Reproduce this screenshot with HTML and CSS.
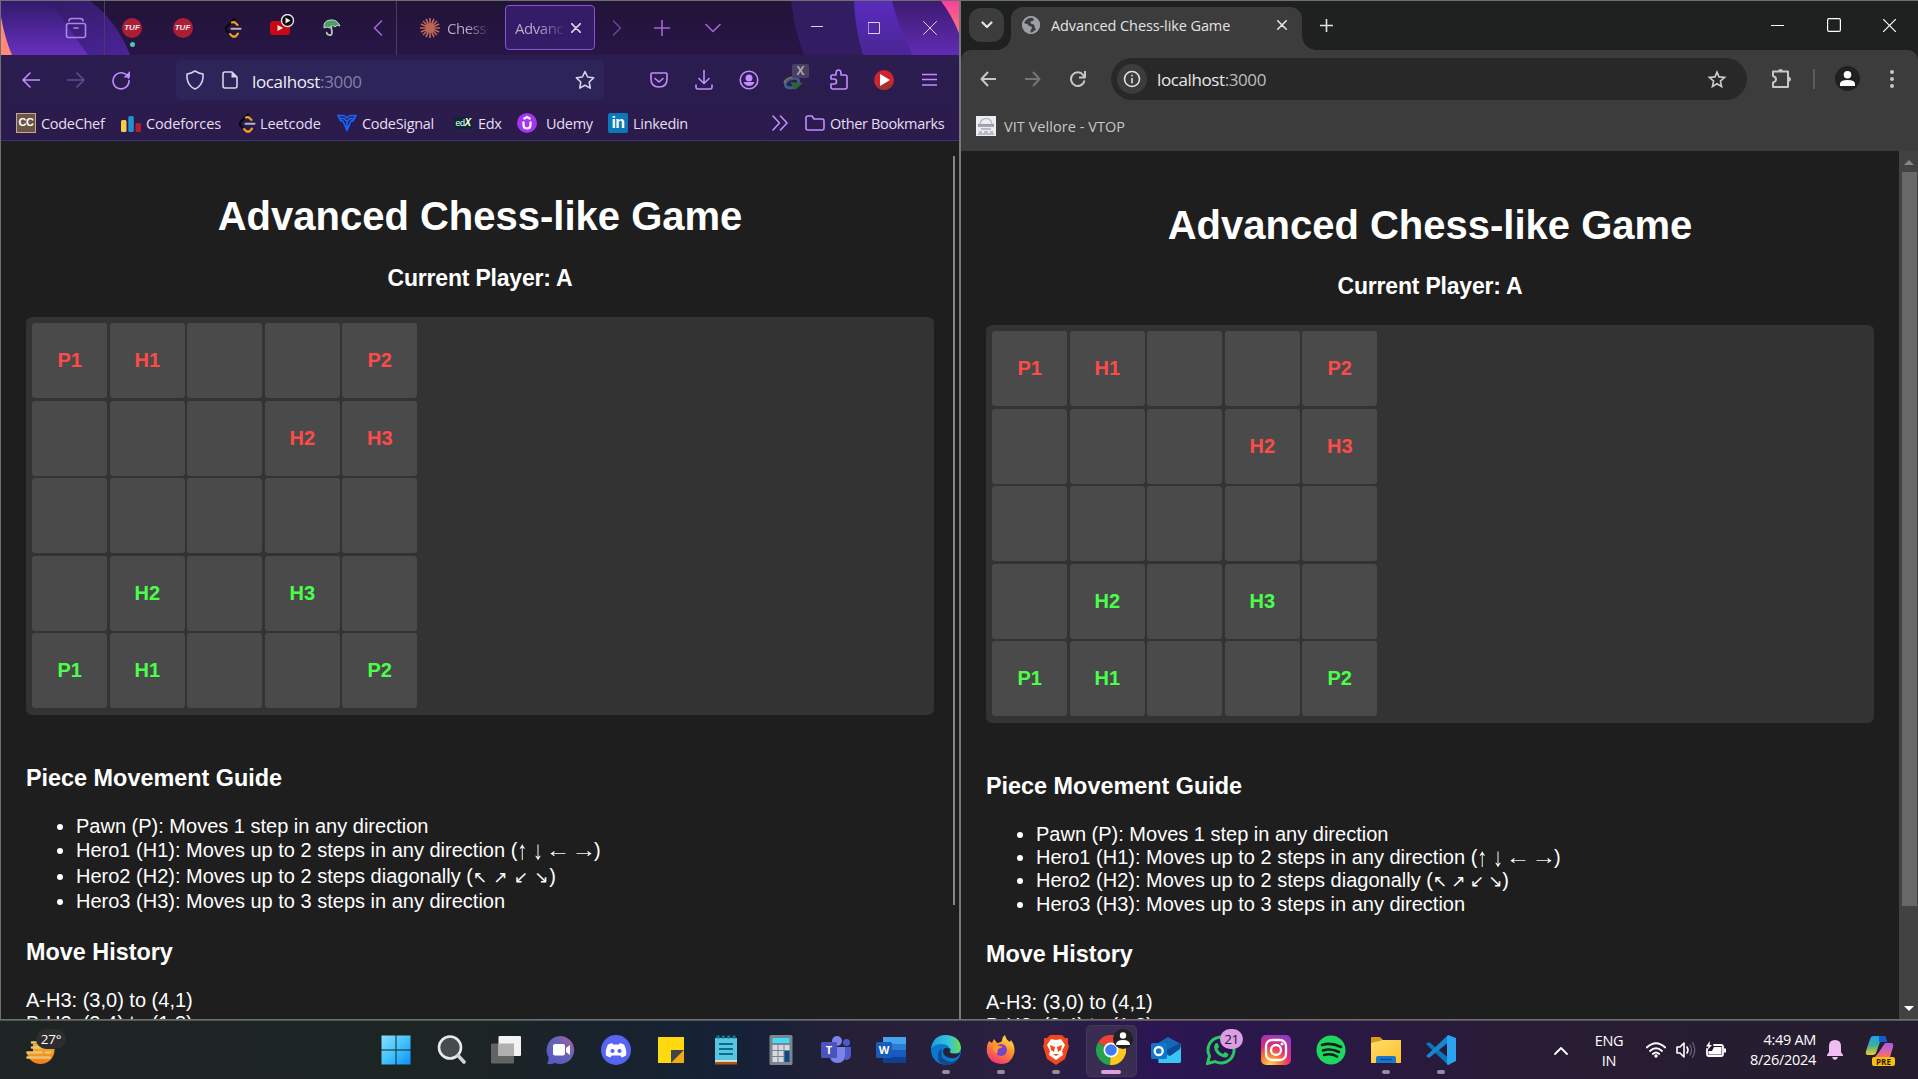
FILE: index.html
```html
<!DOCTYPE html>
<html lang="en">
<head>
<meta charset="utf-8">
<title>Advanced Chess-like Game</title>
<link rel="stylesheet" href="styles.css">
</head>
<body>
<div class="desktop">
<main class="windows">

<section class="window firefox">
  <header class="fx-chrome">
    <svg class="fx-art" width="959" height="140" viewBox="0 0 959 140">
      <defs>
        <linearGradient id="a1" x1="0" y1="0" x2="0" y2="1"><stop offset="0" stop-color="#321a6c"/><stop offset="1" stop-color="#6730bf"/></linearGradient>
        <linearGradient id="a2" x1="0" y1="0" x2="1" y2="1"><stop offset="0" stop-color="#2d195a"/><stop offset="1" stop-color="#4a2499"/></linearGradient>
        <linearGradient id="a3" x1="0" y1="0" x2="0" y2="1"><stop offset="0" stop-color="#5a2bbd"/><stop offset="1" stop-color="#4a2696"/></linearGradient>
        <linearGradient id="a4" x1="0" y1="0" x2="0" y2="1"><stop offset="0" stop-color="#3c1b70"/><stop offset="1" stop-color="#622bb5"/></linearGradient>
        <linearGradient id="a5" x1="0" y1="0" x2="0" y2="1"><stop offset="0" stop-color="#fb3fa0"/><stop offset="1" stop-color="#ff7a78"/></linearGradient>
      </defs>
      <path d="M0 0H89Q116 20 129 54H0Z" fill="url(#a2)"/>
      <path d="M0 0H49L87 54H0Z" fill="url(#a1)"/>
      <path d="M0 16Q4 38 11 54H0Z" fill="#ff8a78"/>
      <path d="M790 0H856L863 54H803Q793 28 790 0Z" fill="#321c62"/>
      <path d="M853 0H892Q900 31 911 54H862Q854 27 853 0Z" fill="url(#a3)"/>
      <path d="M891 0H959V54H911Q898 27 891 0Z" fill="url(#a4)"/>
      <path d="M940 0H959V35Q952 16 940 0Z" fill="url(#a5)"/>
    </svg>
    <div class="fx-tabs">
      <span></span>
      <span class="cell rule"><svg width="22" height="22" viewBox="0 0 22 22" class="ln lilac"><rect x="1.500" y="6.500" width="19" height="14" rx="2"/><path d="M4 4Q4 1.500 7 1.500H15Q18 1.500 18 4M9 11h4"/></svg></span>
      <span class="cell tuf"><b>TUF</b><i class="dot"></i></span>
      <span class="cell tuf"><b>TUF</b></span>
      <span class="cell"><svg width="18" height="20" viewBox="0 0 18 20" class="leet"><path d="M10.500 1 2.500 9Q1 10.500 2.500 12.500L6 16" stroke="#080808"/><path d="M8 4.500Q10 3.500 11.500 5L13.500 7M6 16 8 18Q10 19.300 12 18L14 15.500" stroke="#f5a11c"/><path d="M7.500 10.800H16.500" stroke="#b5b5b5"/></svg></span>
      <span class="cell"><svg width="28" height="28" viewBox="0 0 28 28"><rect x="2" y="7" width="20" height="14" rx="3.500" fill="#c90812"/><path d="M9.500 11v6l5.500-3Z" fill="#eee"/><circle cx="19.500" cy="6.500" r="6" fill="#090909" stroke="#e8e0ee" stroke-width="1.400"/><path d="M17.500 3.500v6l5-3Z" fill="#eee"/></svg></span>
      <span class="cell"><svg width="20" height="20" viewBox="0 0 20 20"><path d="M2 10Q1 3 8 2Q15 1 18 8Q15 6 13 9Q10 6 8 10Q5 8 2 10Z" fill="#48a067" stroke="#c6dec7" stroke-width="1"/><path d="M9 8l1 6Q10 18 7 17T5 14" fill="none" stroke="#b3cbb5" stroke-width="1.800"/></svg></span>
      <span class="cell rule"><svg width="10" height="16" viewBox="0 0 10 16" class="ln violet"><path d="M8.500 1 1.500 8l7 7"/></svg></span>
      <span class="tab-idle"><svg width="20" height="20" viewBox="0 0 20 20" stroke="#bd6654" stroke-width="1.700"><path d="M10 0v20M0 10h20M3 3l14 14M17 3 3 17M6 .8l8 18.400M14 .8 6 19.200M.8 6l18.400 8M19.200 6 .8 14"/></svg><em>Chess-</em></span>
      <span class="tab-live"><em>Advanc</em><svg width="10" height="10" viewBox="0 0 10 10" class="ln pale"><path d="M.5.5l9 9M9.500.5l-9 9"/></svg></span>
      <span class="cell"><svg width="10" height="16" viewBox="0 0 10 16" class="ln faint"><path d="M1.500 1 8.500 8l-7 7"/></svg></span>
      <span class="cell"><svg width="16" height="16" viewBox="0 0 16 16" class="ln violet"><path d="M8 .5v15M.5 8h15"/></svg></span>
      <span class="cell"><svg width="16" height="10" viewBox="0 0 16 10" class="ln violet"><path d="M1 1.500 8 8.500l7-7"/></svg></span>
      <span></span>
      <span class="cell"><svg width="12" height="12" viewBox="0 0 12 12" class="ln pale thin"><path d="M0 4.500h12"/></svg></span>
      <span class="cell"><svg width="12" height="12" viewBox="0 0 12 12" class="ln pale thin"><rect x=".5" y=".5" width="11" height="11"/></svg></span>
      <span class="cell"><svg width="14" height="14" viewBox="0 0 14 14" class="ln pale thin"><path d="M.5.5l13 13M13.500.5l-13 13"/></svg></span>
    </div>
    <div class="fx-nav">
      <span></span>
      <span class="cell"><svg width="18" height="16" viewBox="0 0 18 16" class="ln bright"><path d="M18 8H1M8 1 1 8l7 7"/></svg></span>
      <span class="cell"><svg width="18" height="16" viewBox="0 0 18 16" class="ln faint"><path d="M0 8h17M10 1l7 7-7 7"/></svg></span>
      <span class="cell"><svg width="20" height="20" viewBox="0 0 20 20" class="ln bright"><path d="M17.500 8A8 8 0 1 0 18 10.500"/><path d="M19 1v6.500h-6.500Z" fill="#c38cff" stroke="none"/></svg></span>
      <span></span>
      <div class="fx-url">
        <svg width="20" height="20" viewBox="0 0 20 20" class="ln pale"><path d="M10 1Q14 3.500 18 4V8Q17 16 10 19Q3 16 2 8V4Q6 3.500 10 1Z"/></svg>
        <svg width="18" height="20" viewBox="0 0 18 20" class="ln pale"><path d="M11 2H4Q2 2 2 4V16Q2 18 4 18H14Q16 18 16 16V7Z"/><path d="M10.500 1.500V7.500H16.500Z" fill="#d9d2e9" stroke="none"/></svg>
        <span class="url">localhost<i>:3000</i></span>
        <svg class="end" width="20" height="20" viewBox="0 0 20 20"><path d="M10 1.500l2.600 5.500 6 .8-4.400 4.200 1.100 6.100L10 15.200l-5.300 2.900 1.100-6.100L1.400 7.800l6-.8Z" fill="none" stroke="#d9d2e9" stroke-width="1.600" stroke-linejoin="round"/></svg>
      </div>
      <span></span>
      <span class="cell"><svg width="18" height="18" viewBox="0 0 18 18" class="ln bright"><path d="M1 3Q1 2 2 2H16Q17 2 17 3V8Q17 16 9 16Q1 16 1 8Z"/><path d="M5 7.500 9 11l4-3.500"/></svg></span>
      <span class="cell"><svg width="18" height="20" viewBox="0 0 18 20" class="ln bright"><path d="M9 0v13M4 8.500 9 13.500l5-5M1 15v2Q1 19 3 19H15Q17 19 17 17V15"/></svg></span>
      <span class="cell"><svg width="20" height="20" viewBox="0 0 20 20" class="ln bright"><circle cx="10" cy="10" r="8.800"/><circle cx="10" cy="8" r="3.500" fill="#c38cff" stroke="none"/><path d="M4.500 12h11Q14 16 10 16T4.500 12Z" fill="#c38cff" stroke="none"/></svg></span>
      <span class="cell"><svg width="28" height="30" viewBox="0 0 28 30"><ellipse cx="12" cy="18" rx="7" ry="4.500" transform="rotate(-20 12 18)" fill="none" stroke="#405a8e" stroke-width="3"/><path d="M4 18Q6 12 15 12" fill="none" stroke="#857d3c" stroke-width="1.500"/><path d="M10 17l13 1-8 7Z" fill="#2b652f"/></svg><b class="x-badge">X</b></span>
      <span class="cell"><svg width="20" height="22" viewBox="0 0 20 22" class="ln bright"><path d="M3 6H7V4Q7 1 9.500 1T12 4V6H16Q18 6 18 8V18Q18 20 16 20H4Q2 20 2 18V15H5Q7.500 15 7.500 12.500T5 10H2V7Q2 6 3 6Z"/></svg></span>
      <span class="cell"><svg width="20" height="20" viewBox="0 0 20 20"><circle cx="10" cy="10" r="10" fill="#cf2430"/><path d="M2 16a10 10 0 0 0 16 0L14 12Z" fill="#a5312f"/><path d="M6 4v12l10-6Z" fill="#fff"/></svg></span>
      <span class="cell"><svg width="15" height="14" viewBox="0 0 15 14" class="ln bright"><path d="M0 1.500h15M0 6.500h15M0 12h15"/></svg></span>
    </div>
    <div class="fx-marks">
      <span class="mark m1"><i class="cc">CC</i>CodeChef</span>
      <span class="mark m2"><svg width="20" height="20" viewBox="0 0 20 20"><rect y="7" width="5.500" height="12" rx="1.500" fill="#f8cd4a"/><rect x="7.300" y="3" width="5.500" height="16" rx="1.500" fill="#2191cf"/><rect x="14.500" y="10" width="5.500" height="9" rx="1.500" fill="#b3202b"/></svg>Codeforces</span>
      <span class="mark m3"><svg width="18" height="20" viewBox="0 0 18 20" class="leet"><path d="M10.500 1 2.500 9Q1 10.500 2.500 12.500L6 16" stroke="#080808"/><path d="M8 4.500Q10 3.500 11.500 5L13.500 7M6 16 8 18Q10 19.300 12 18L14 15.500" stroke="#f5a11c"/><path d="M7.500 10.800H16.500" stroke="#b5b5b5"/></svg>Leetcode</span>
      <span class="mark m4"><svg width="20" height="18" viewBox="0 0 20 18" class="ln" stroke="#1467ff"><path d="M1 1.500H6Q8 1.500 10 4Q12 1.500 14 1.500H19L16 7H14L10 16.500 6 7H4ZM3 4.500H7L10 7.500 13 4.500H17M10 7v6"/></svg>CodeSignal</span>
      <span class="mark m5"><i class="edx"><s>ed</s>X</i>Edx</span>
      <span class="mark m6"><svg width="20" height="20" viewBox="0 0 20 20"><circle cx="10" cy="10" r="10" fill="#a435f0"/><path d="M6.500 8.500V12Q6.500 15.500 10 15.500T13.500 12V8.500M6.500 6 10 4l3.500 2" fill="none" stroke="#fff" stroke-width="2.200"/></svg>Udemy</span>
      <span class="mark m7"><i class="in">in</i>Linkedin</span>
      <span class="mark m8"><svg width="16" height="16" viewBox="0 0 16 16" class="ln bright"><path d="M1 1l6.500 7L1 15M8.500 1 15 8l-6.500 7"/></svg></span>
      <span class="mark m9"><svg width="20" height="18" viewBox="0 0 20 18" class="ln bright"><path d="M1 4Q1 2 3 2H7L9 5H17Q19 5 19 7V14Q19 16 17 16H3Q1 16 1 14Z"/></svg>Other Bookmarks</span>
    </div>
  </header>
  <article class="page">
    <h1>Advanced Chess-like Game</h1>
    <h3 class="turn">Current Player: A</h3>
    <div class="board">
      <b class="a">P1</b><b class="a">H1</b><b></b><b></b><b class="a">P2</b>
      <b></b><b></b><b></b><b class="a">H2</b><b class="a">H3</b>
      <b></b><b></b><b></b><b></b><b></b>
      <b></b><b class="z">H2</b><b></b><b class="z">H3</b><b></b>
      <b class="z">P1</b><b class="z">H1</b><b></b><b></b><b class="z">P2</b>
    </div>
    <h3 class="guide">Piece Movement Guide</h3>
    <ul>
      <li>Pawn (P): Moves 1 step in any direction</li>
      <li>Hero1 (H1): Moves up to 2 steps in any direction (<span class="arrows"><i class="tall">↑</i> <i class="tall">↓</i> <i>←</i> <i>→</i></span>)</li>
      <li>Hero2 (H2): Moves up to 2 steps diagonally (<span class="diag"><i>↖</i><i>↗</i><i>↙</i><i>↘</i></span>)</li>
      <li>Hero3 (H3): Moves up to 3 steps in any direction</li>
    </ul>
    <h3 class="history">Move History</h3>
    <div>A-H3: (3,0) to (4,1)</div>
    <div>B-H2: (2,4) to (1,3)</div>
    <div class="fx-thumb"></div>
  </article>
</section>

<section class="window chrome">
  <header class="gc-chrome">
    <div class="gc-tabs">
      <span class="search-tabs"><svg width="12" height="8" viewBox="0 0 12 8" class="ln gcw bold"><path d="M1.500 1.500 6 6l4.500-4.500"/></svg></span>
      <div class="gc-tab">
        <svg width="18" height="18" viewBox="0 0 18 18"><circle cx="9" cy="9" r="9" fill="#9aa0a6"/><path d="M10 1.500Q4 2 2 7L6 8.500Q7 11 9.500 10.500L10 12 8.500 14.500V17H10Q12 14 14 13.500L12.500 11Q13 8 9.500 8L8 5.500Q11 6 12 3.500Z" fill="#3c3c3c"/><circle cx="9" cy="9" r="8.200" fill="none" stroke="#9aa0a6" stroke-width="1.600"/></svg>
        <span>Advanced Chess-like Game</span>
        <svg width="10" height="10" viewBox="0 0 10 10" class="ln gcw"><path d="M.7.7l8.600 8.600M9.300.7.7 9.300"/></svg>
      </div>
      <span class="cell"><svg width="13" height="13" viewBox="0 0 13 13" class="ln gcw"><path d="M6.500 0v13M0 6.500h13"/></svg></span>
      <span></span>
      <span class="cell"><svg width="13" height="13" viewBox="0 0 13 13" class="ln white"><path d="M0 6.500h13"/></svg></span>
      <span class="cell"><svg width="14" height="14" viewBox="0 0 14 14" class="ln white"><rect x=".6" y=".6" width="12.800" height="12.800" rx="1.500"/></svg></span>
      <span class="cell"><svg width="13" height="13" viewBox="0 0 13 13" class="ln white"><path d="M.3.3l12.400 12.400M12.700.3.3 12.700"/></svg></span>
    </div>
    <div class="gc-bar">
      <span></span>
      <span class="cell"><svg width="16" height="16" viewBox="0 0 16 16" class="ln gc"><path d="M16 8H1.500M8 1 1.500 8 8 15"/></svg></span>
      <span class="cell"><svg width="16" height="16" viewBox="0 0 16 16" class="ln gcd"><path d="M0 8h14.500M8 1l6.500 7L8 15"/></svg></span>
      <span class="cell"><svg width="16" height="16" viewBox="0 0 16 16" class="ln gc"><path d="M14.500 9.500A6.800 6.800 0 1 1 13.200 4L15 6.500M15 0V6.500H9"/></svg></span>
      <span></span>
      <div class="omni">
        <span class="info"><svg width="18" height="18" viewBox="0 0 18 18" class="ln gcw"><circle cx="9" cy="9" r="7.500"/><path d="M9 8.500v4.300M9 5.300v.5"/></svg></span>
        <span class="url">localhost<i>:3000</i></span>
        <svg class="end" width="20" height="20" viewBox="0 0 20 20"><path d="M10 3l2 4.900 5.600.5-4.200 3.700 1.200 5.400L10 14.700l-4.600 2.800 1.200-5.400L2.400 8.400 8 7.900Z" fill="none" stroke="#ccc" stroke-width="1.600"/></svg>
      </div>
      <span></span>
      <span class="cell"><svg width="22" height="22" viewBox="0 0 22 22" class="ln gc"><path d="M3 3.500H18V19H3V14.500Q6 13.500 6 11.200T3 8Z" stroke-linejoin="round"/><path d="M8 3.500Q8 1 10.500 1T13 3.500ZM18 8.500Q21 9 21 11.200T18 14Z" fill="#c7c7c7" stroke="none"/></svg></span>
      <span class="cell"><i class="gc-sep"></i></span>
      <span class="cell"><svg width="25" height="25" viewBox="0 0 25 25"><circle cx="12.500" cy="12.500" r="12.500" fill="#1f2120"/><circle cx="12.500" cy="8.800" r="3.800" fill="#fff"/><path d="M5 20V18Q5 14 12.500 14T20 18V20Z" fill="#fff"/></svg></span>
      <span class="cell"><svg width="4" height="18" viewBox="0 0 4 18" fill="#c7c7c7"><circle cx="2" cy="2" r="2"/><circle cx="2" cy="9" r="2"/><circle cx="2" cy="16" r="2"/></svg></span>
    </div>
    <div class="gc-marks"><svg width="20" height="20" viewBox="0 0 20 20"><rect width="20" height="20" fill="#eeeef2"/><path d="M4 8Q5 2.500 10 2.500T16 8" fill="none" stroke="#b9bcca" stroke-width="1.500"/><path d="M2 8h16v3H2Z" fill="#9598a9"/><path d="M3 10h14M5 13h10M3 16h3m2 0h4m2 0h3M2 18h16" stroke="#a7aaba" stroke-width="1.500"/></svg><span>VIT Vellore - VTOP</span></div>
  </header>
  <div class="gc-body">
  <article class="page">
    <h1>Advanced Chess-like Game</h1>
    <h3 class="turn">Current Player: A</h3>
    <div class="board">
      <b class="a">P1</b><b class="a">H1</b><b></b><b></b><b class="a">P2</b>
      <b></b><b></b><b></b><b class="a">H2</b><b class="a">H3</b>
      <b></b><b></b><b></b><b></b><b></b>
      <b></b><b class="z">H2</b><b></b><b class="z">H3</b><b></b>
      <b class="z">P1</b><b class="z">H1</b><b></b><b></b><b class="z">P2</b>
    </div>
    <h3 class="guide">Piece Movement Guide</h3>
    <ul>
      <li>Pawn (P): Moves 1 step in any direction</li>
      <li>Hero1 (H1): Moves up to 2 steps in any direction (<span class="arrows"><i class="tall">↑</i> <i class="tall">↓</i> <i>←</i> <i>→</i></span>)</li>
      <li>Hero2 (H2): Moves up to 2 steps diagonally (<span class="diag"><i>↖</i><i>↗</i><i>↙</i><i>↘</i></span>)</li>
      <li>Hero3 (H3): Moves up to 3 steps in any direction</li>
    </ul>
    <h3 class="history">Move History</h3>
    <div>A-H3: (3,0) to (4,1)</div>
    <div>B-H2: (2,4) to (1,3)</div>
  </article>
  <div class="gc-scroll">
    <svg width="10" height="5" viewBox="0 0 10 5"><path d="M5 0l5 5H0Z" fill="#868686"/></svg>
    <i></i>
    <svg width="10" height="5" viewBox="0 0 10 5"><path d="M0 0h10L5 5Z" fill="#fff"/></svg>
  </div>
  </div>
</section>
</main>

<footer class="taskbar">
  <div class="weather">
    <svg width="30" height="34" viewBox="0 0 30 34"><defs><linearGradient id="sun" x1="0" y1="0" x2="0" y2="1"><stop offset="0" stop-color="#ffc033"/><stop offset="1" stop-color="#ef7d1e"/></linearGradient></defs><circle cx="15.500" cy="18" r="14" fill="url(#sun)"/><path d="M0 0H30V12H0ZM0 12H8V20H0Z" fill="#1e2424"/><path d="M7 10.500h4M7 15.500h9M2.500 20.500h14M21 20.500h4M2.500 25.500h22" stroke="#e7c66f" stroke-width="2.600" stroke-linecap="round"/></svg>
    <span>27°</span>
  </div>
  <nav class="apps">
    <span><svg width="30" height="30" viewBox="0 0 30 30"><defs><linearGradient id="w" x1="0" y1="0" x2="1" y2="1"><stop offset="0" stop-color="#86dfff"/><stop offset=".5" stop-color="#43c4fc"/><stop offset="1" stop-color="#0b8fff"/></linearGradient></defs><path d="M.5.5h14v14H.5ZM15.500.5h14v14h-14ZM.5 15.500h14v14H.5ZM15.500 15.500h14v14h-14Z" fill="url(#w)"/></svg></span>
    <span><svg width="30" height="30" viewBox="0 0 30 30"><circle cx="14" cy="12.500" r="11" fill="#454c4c" stroke="#e9e9e9" stroke-width="2.600"/><path d="M22 20.500l6 6.500" stroke="#d0d4d8" stroke-width="3.600" stroke-linecap="round"/></svg></span>
    <span><svg width="30" height="30" viewBox="0 0 30 30"><rect y="8.500" width="23" height="20" rx="1" fill="#636363"/><rect x="7.500" y="1" width="22.500" height="20" rx="1" fill="#f3f3f3"/><rect x="7.500" y="8.500" width="15.500" height="12.500" fill="#b0b0b0"/></svg></span>
    <span><svg width="30" height="30" viewBox="0 0 30 30"><defs><linearGradient id="ch" x1="0" y1="1" x2="1" y2="0"><stop offset="0" stop-color="#5357c5"/><stop offset=".6" stop-color="#6a63b4"/><stop offset="1" stop-color="#b45ca6"/></linearGradient></defs><path d="M15 1a14 14 0 1 1-6 27Q5 30 1 28.500Q3 26 2.500 22A14 14 0 0 1 15 1Z" fill="url(#ch)"/><rect x="7" y="9" width="12" height="11.500" rx="2" fill="#fff"/><path d="M20 13l4-3v10l-4-3Z" fill="#fff"/></svg></span>
    <span><svg width="30" height="30" viewBox="0 0 30 30"><circle cx="15" cy="15" r="15" fill="#5865f2"/><path d="M11 8l-4 1.500Q4 15 5 20.500L9 22.500 11 20.500H19L21 22.500 25 20.500Q26 15 23 9.500L19 8 18 9.500H12Z" fill="#fff"/><circle cx="11.500" cy="16" r="2.100" fill="#5865f2"/><circle cx="18.500" cy="16" r="2.100" fill="#5865f2"/></svg></span>
    <span><svg width="28" height="28" viewBox="0 0 28 28"><path d="M1 1H27V15L15 27H1Z" fill="#ffd90f"/><path d="M14 27L27 14V27Z" fill="#f4ab13"/><path d="M14 14H27L14 27Z" fill="#454443"/></svg></span>
    <span><svg width="24" height="32" viewBox="0 0 24 32"><rect x="1" y="4" width="22" height="26" fill="#59c6e0"/><path d="M1 29h22" stroke="#b2560f" stroke-width="3"/><path d="M1 27h22" stroke="#eee" stroke-width="1.500"/><path d="M5 10h14M5 15h14M5 20h14" stroke="#08708d" stroke-width="1.800"/><g fill="#0c7898"><circle cx="4" cy="3" r="1.800"/><circle cx="9.300" cy="3" r="1.800"/><circle cx="14.600" cy="3" r="1.800"/><circle cx="20" cy="3" r="1.800"/></g></svg></span>
    <span><svg width="24" height="30" viewBox="0 0 24 30"><rect x=".5" width="23" height="30" rx="1.500" fill="#7b858d"/><rect x="3.500" y="3" width="17" height="5" fill="#48d8f8"/><path d="M3.500 10h5v5h-5ZM9.500 10h5v5h-5ZM15.500 10h5v5h-5ZM3.500 16h5v5h-5ZM9.500 16h5v5h-5ZM3.500 22h5v5h-5ZM9.500 22h5v5h-5Z" fill="#d5dae0"/><path d="M15.500 16h5v11h-5Z" fill="#0e4b86"/></svg></span>
    <span><svg width="30" height="30" viewBox="0 0 30 30"><circle cx="16" cy="6" r="5" fill="#7b83eb"/><circle cx="25.500" cy="7.500" r="3.500" fill="#5059c9"/><path d="M20 12h10v8q0 5-6 5Z" fill="#5059c9"/><path d="M9 12h15v8q0 8-7.500 8T9 20Z" fill="#7b83eb"/><rect y="7" width="16" height="16" rx="1.500" fill="#4b53bc"/></svg><b class="letter t">T</b></span>
    <span><svg width="30" height="30" viewBox="0 0 30 30"><path d="M7 2h23v7H7Z" fill="#42a5ee"/><path d="M7 9h23v6H7Z" fill="#2b7cd3"/><path d="M7 15h23v7H7Z" fill="#185abd"/><path d="M7 22h23v6H7Z" fill="#103f91"/><rect y="7" width="16" height="16" rx="1.500" fill="#185abd"/></svg><b class="letter w">W</b></span>
    <span class="run"><svg width="30" height="30" viewBox="0 0 30 30"><defs><linearGradient id="e1"><stop offset="0" stop-color="#1f9fdd"/><stop offset=".6" stop-color="#33c4d8"/><stop offset="1" stop-color="#6be04c"/></linearGradient></defs><circle cx="15" cy="15" r="15" fill="#0a78d1"/><path d="M0 14Q2 0 15 0Q29 1 30 13Q29 19 22 19Q18 19 18.500 16Q19 9 11 9Q3 9 0 14Z" fill="url(#e1)"/><path d="M11 14Q8 23 16 26Q22 28 27 24Q23 30 15 30Q6 29 7 20Q8 14 11 14Z" fill="#114a8b"/><path d="M18 13Q21 14 18.500 17Q20 19.500 29 18Q27 24 20 23Q12 22 12 16Q13 12 18 13Z" fill="#252338"/></svg></span>
    <span class="run"><svg width="30" height="30" viewBox="0 0 30 30"><defs><linearGradient id="f1" x1=".8" y1="0" x2=".3" y2="1"><stop offset="0" stop-color="#ffe84a"/><stop offset=".45" stop-color="#ff932b"/><stop offset="1" stop-color="#f42f78"/></linearGradient></defs><path d="M3 6L6 8 8 4 11 8Q14 8 16 6Q16 2 19 0Q20 5 24 7L25 5Q30 12 28 19Q25 29 15 29Q3 28 1 18Q0 11 3 6Z" fill="url(#f1)"/><circle cx="15" cy="15" r="6" fill="#7a43c8"/><path d="M7 11Q11 9 17 12L12 14 11 19Q7 17 7 11Z" fill="#ff9828"/></svg></span>
    <span class="run"><svg width="26" height="30" viewBox="0 0 26 30"><path d="M7 0H19L22 3H25V9L26 11 22 24 13 30 4 24 0 11 1 9V3H4Z" fill="#f3481c"/><path d="M8 4l5 1 5-1 4 6-3 6 1 4-7 5-7-5 1-4-3-6Z" fill="#fff"/><path d="M7 10l5 2-1 5-3-2ZM19 10l-5 2 1 5 3-2ZM10 19h6l-3 2Z" fill="#f3481c"/></svg></span>
    <span class="run live"><svg width="30" height="30" viewBox="0 0 30 30"><path d="M15 15L2 7.500A15 15 0 0 1 28 7.500Z" fill="#ea4335"/><path d="M15 15L2 7.500A15 15 0 0 0 14 30Z" fill="#25a24c"/><path d="M15 15L28 7.500A15 15 0 0 1 14 30Z" fill="#fcc71f"/><circle cx="15" cy="15" r="7.500" fill="#fff"/><circle cx="15" cy="15" r="5.800" fill="#3b7ded"/></svg><svg class="person" width="20" height="20" viewBox="0 0 20 20"><circle cx="10" cy="10" r="10" fill="#202122"/><circle cx="10" cy="6.500" r="3.200" fill="#fff"/><path d="M3 16Q3 11 10 11T17 16Z" fill="#fff"/></svg></span>
    <span><svg width="30" height="30" viewBox="0 0 30 30"><path d="M7 8L17 2 30 9V27Q30 28 28 28H7Z" fill="#1568b5"/><path d="M6 13l12 8 12-9v14q0 2-2 2H8Z" fill="#38c6f4"/><path d="M14 16L29 8v6L19 21Z" fill="#0b4a94"/><rect y="8" width="16" height="16" rx="1.500" fill="#0f77cb"/><circle cx="7.700" cy="16" r="4" fill="none" stroke="#fff" stroke-width="2.300"/></svg></span>
    <span><svg width="30" height="30" viewBox="0 0 30 30"><path d="M1.500 28.500L3.500 21A13 13 0 1 1 9 26.500Z" fill="none" stroke="#28c863" stroke-width="3"/><path d="M9 9Q11 7 12 9L13 12 11.500 14Q13 17.500 17 19L19 17 22.500 19Q22 23 18 22.500Q9 20 8 12Z" fill="#28c863"/></svg><em class="badge">21</em></span>
    <span><svg width="30" height="30" viewBox="0 0 30 30"><defs><radialGradient id="ig" cx=".3" cy="1" r="1.100"><stop offset="0" stop-color="#ffd35a"/><stop offset=".3" stop-color="#fa7e2c"/><stop offset=".6" stop-color="#dd2c78"/><stop offset="1" stop-color="#8a3ac8"/></radialGradient></defs><rect width="30" height="30" rx="5" fill="url(#ig)"/><rect x="5" y="5" width="20" height="20" rx="6" fill="none" stroke="#fff" stroke-width="2.300"/><circle cx="15" cy="15" r="5" fill="none" stroke="#fff" stroke-width="2.300"/><circle cx="21" cy="9" r="1.500" fill="#fff"/></svg></span>
    <span><svg width="30" height="30" viewBox="0 0 30 30"><circle cx="15" cy="15" r="14.500" fill="#1ed760"/><path d="M6 10Q15 7 25 12M7 15.500Q15 13 23 17M8 20Q15 18 21 21.500" fill="none" stroke="#14201a" stroke-width="2.600" stroke-linecap="round"/></svg></span>
    <span class="run"><svg width="30" height="30" viewBox="0 0 30 30"><defs><linearGradient id="fo" x1="0" y1="0" x2="1" y2="1"><stop offset="0" stop-color="#ffdc6b"/><stop offset="1" stop-color="#ffc028"/></linearGradient></defs><path d="M0 3Q0 2 1 2H9L12 5V9H0Z" fill="#dd9a13"/><path d="M0 8L9 6 11 5H30V28H0Z" fill="url(#fo)"/><path d="M5 28V23Q5 21 7 21H23Q25 21 25 23V28Z" fill="#1878cb"/><path d="M9 24.500h12" stroke="#0c4e92" stroke-width="1.500"/></svg></span>
    <span class="run"><svg width="30" height="30" viewBox="0 0 30 30"><path d="M0 9L3 7 24 24V29L22 30Z" fill="#0c75b8"/><path d="M0 21L22 0 24 5V6L3 23Z" fill="#1687ce"/><path d="M22 0L30 3V26L22 30Q21 30 21 28V2Z" fill="#2aa4ef"/></svg></span>
  </nav>
  <div class="tray">
    <span class="cell"><svg width="14" height="9" viewBox="0 0 14 9" class="ln white mid"><path d="M1 8l6-6 6 6"/></svg></span>
    <span class="lang">ENG<br>IN</span>
    <span class="cell"><svg width="20" height="16" viewBox="0 0 20 16" class="ln white mid"><path d="M.8 5.500Q10-3 19.200 5.500M4 9Q10 3.500 16 9M6.800 12Q10 9 13.200 12"/><circle cx="10" cy="14" r="1.700" fill="#fff" stroke="none"/></svg></span>
    <span class="cell"><svg width="20" height="18" viewBox="0 0 20 18" class="ln white"><path d="M1 6H4L8 2V16L4 12H1ZM11 6Q13 9 11 12" stroke-width="1.600"/><path d="M14 4Q17 9 14 14M16.500 1.500Q21 9 16.500 16.500" stroke="#6d6572"/></svg></span>
    <span class="cell"><svg width="20" height="18" viewBox="0 0 20 18" class="ln white mid"><path d="M8 4H15Q17 4 17 6V13Q17 15 15 15H3Q1 15 1 13V8"/><path d="M8 6H15.500V13.500H2.500V10H6ZM18 7.500h2v4h-2Z" fill="#fff" stroke="none"/><path d="M4 0L0 5.500H2.500L1.500 9 6 4H3.500Z" fill="#fff" stroke="none"/></svg></span>
    <span class="clock">4:49 AM<br>8/26/2024</span>
    <span class="cell"><svg width="16" height="20" viewBox="0 0 16 20"><path d="M8 0Q14 0 14 6V12L16 15V16H0V15L2 12V6Q2 0 8 0ZM5 17H11Q10 20 8 20T5 17Z" fill="#efbdf3"/></svg></span>
    <span class="cell"><svg width="30" height="30" viewBox="0 0 30 30"><defs><linearGradient id="c1" x1="0" y1="0" x2="0" y2="1"><stop offset="0" stop-color="#1aa2f2"/><stop offset=".5" stop-color="#3fae97"/><stop offset="1" stop-color="#f4cd25"/></linearGradient><linearGradient id="c2" x1="0" y1="0" x2="0" y2="1"><stop offset="0" stop-color="#a959f2"/><stop offset="1" stop-color="#fb6e68"/></linearGradient></defs><path d="M8 1H20L22 7H15L11 18Q10 20 8 20H3Q0 20 1 16L5 4Q6 1 8 1Z" fill="url(#c1)"/><path d="M14 1H19Q21 1 22 7H14Z" fill="#1759cc"/><path d="M20 8H26Q29 8 28 12L25 22H10L14 17Z" fill="url(#c2)"/></svg><b class="pre">PRE</b></span>
  </div>
</footer>
</div>
</body>
</html>
```
FILE: styles.css
```css
* { box-sizing: border-box; }
body {
  margin: 0;
  overflow: hidden;
  background: #1e1e1e;
  font-family: "Open Sans", "Noto Sans", sans-serif;
}
i, em, s { font-style: normal; text-decoration: none; }
svg { display: block; flex: none; }

.desktop { display: flex; flex-direction: column; width: 1918px; height: 1079px; }
.windows { display: flex; height: 1020px; }
.window {
  display: flex;
  flex-direction: column;
  border: 1px solid #6e7070;
  border-right: 0;
  background: #1e1e1e;
  overflow: hidden;
}
.firefox { width: 959px; }
.chrome { width: 959px; border-left: 2px solid #777979; }

.cell { position: relative; display: flex; align-items: center; justify-content: center; }

/* Stroke icon colours */
.ln { fill: none; stroke-width: 1.6; stroke-linecap: round; stroke-linejoin: round; }
.thin { stroke-width: 1; }
.mid { stroke-width: 1.8; }
.bold { stroke-width: 2.2; }
.lilac { stroke: #b284e6; }
.violet { stroke: #a466d6; }
.bright { stroke: #c38cff; }
.faint { stroke: #6b4496; }
.pale { stroke: #d9d2e9; }
.gcw { stroke: #e3e3e3; }
.gc { stroke: #c7c7c7; stroke-linecap: butt; stroke-width: 2; }
.gcd { stroke: #757575; stroke-linecap: butt; stroke-width: 2; }
.white { stroke: #fff; stroke-width: 1.2; }
.white.mid { stroke-width: 1.8; }
.leet { fill: none; stroke-width: 2.1; stroke-linecap: round; }

/* Firefox chrome */
.fx-chrome {
  position: relative;
  flex: none;
  height: 140px;
  border-bottom: 1px solid #3a3278;
  background: linear-gradient(#221338, #271646 54px, #2b1d50 54px, #2b1b4c);
}
.fx-art { position: absolute; top: 0; left: 0; }
.fx-tabs, .fx-nav { position: relative; display: grid; }
.fx-tabs {
  height: 54px;
  grid-template-columns: 47px 57px 54px 47px 54px 44px 56px 37px 108px 90px 44px 46px 56px 48px 56px 58px 54px;
}
.rule { border-right: 1px solid #493c62; }
.tuf b {
  width: 20px;
  height: 20px;
  border-radius: 50%;
  background: #ad1d36;
  color: #eee;
  font: italic bold 8px/20px "Liberation Sans", sans-serif;
  text-align: center;
}
.dot {
  position: absolute;
  top: 41px;
  left: 25px;
  width: 5px;
  height: 5px;
  border-radius: 50%;
  background: #4cc9a6;
}
.tab-idle, .tab-live { display: flex; align-items: center; font-size: 15px; letter-spacing: -.45px; }
.tab-idle { padding-left: 23px; gap: 7px; }
.tab-idle em, .tab-live em {
  overflow: hidden;
  background: linear-gradient(90deg, #b9aec8 45%, rgba(185, 174, 200, 0));
  -webkit-background-clip: text;
  background-clip: text;
  color: transparent;
}
.tab-live {
  height: 45px;
  margin-top: 4px;
  padding-left: 9px;
  gap: 4px;
  border: 1px solid #8a54cf;
  border-radius: 4px;
  background: #351c68;
}
.tab-live em { width: 52px; }

.fx-nav {
  height: 49px;
  grid-template-columns: 7px 46px 44px 46px 32px 428px 33px 44px 45px 46px 44px 46px 44px 46px;
}
.fx-url {
  display: flex;
  align-items: center;
  height: 40px;
  margin-top: 5px;
  padding: 0 9px;
  gap: 16px;
  border-radius: 5px;
  background: #2d2459;
}
.url { font-size: 17px; letter-spacing: -.45px; color: #f1edf7; white-space: nowrap; }
.fx-url .url { margin: 2px 0 0 -3px; letter-spacing: -.35px; }
.url i { color: #877fa4; }
.end { margin-left: auto; }
.x-badge {
  position: absolute;
  top: 9px;
  left: 20px;
  width: 17px;
  height: 14px;
  border-radius: 2px;
  background: #49405f;
  font-size: 12px;
  line-height: 14px;
  text-align: center;
  color: #aaa1b8;
}

.fx-marks { position: relative; display: flex; height: 38px; padding-left: 15px; }
.mark {
  display: flex;
  align-items: center;
  gap: 5px;
  color: #e5dff0;
  font-size: 14.5px;
  letter-spacing: -.3px;
  white-space: nowrap;
}
.m1 { width: 105px; }
.m2 { width: 117px; letter-spacing: -.15px; }
.m3 { width: 99px; gap: 4px; letter-spacing: -.1px; }
.m4 { width: 117px; }
.m5 { width: 63px; gap: 6px; }
.m6 { width: 91px; gap: 9px; }
.m7 { width: 164px; }
.m8 { width: 33px; }
.m9 { letter-spacing: -.35px; }
.cc, .in, .edx { height: 20px; flex: none; text-align: center; letter-spacing: -.5px; }
.cc { width: 20px; border: 1px solid #c6aa90; background: #6e5445; color: #fff; font: bold 11px/17px "Liberation Sans", sans-serif; }
.in { width: 20px; border-radius: 2px; background: #0b79b9; color: #fff; font: bold 16px/19px "Liberation Sans", sans-serif; }
.edx { width: 18px; height: 12px; background: #082c2b; color: #fff; font: italic bold 10px/11px "Liberation Sans", sans-serif; }
.edx s { font-weight: normal; font-size: 9px; }

.fx-thumb {
  position: absolute;
  top: 15px;
  right: 4px;
  width: 2px;
  height: 749px;
  background: #868686;
}

/* Chrome chrome */
.gc-chrome { flex: none; height: 150px; background: #1f2120; }
.gc-tabs {
  display: grid;
  height: 49px;
  grid-template-columns: 50px 291px 48px 399px 57px 55px 57px;
}
.search-tabs {
  display: flex;
  align-items: center;
  justify-content: center;
  width: 35px;
  height: 34px;
  margin: 7px 0 0 8px;
  border-radius: 12px;
  background: #3c3c3c;
}
.gc-tabs > .cell { height: 49px; padding-bottom: 1px; }
.gc-tab {
  position: relative;
  display: flex;
  align-items: center;
  height: 43px;
  margin-top: 6px;
  padding: 0 15px 7px 11px;
  border-radius: 12px 12px 0 0;
  background: #3c3c3c;
}
.gc-tab::before, .gc-tab::after {
  content: "";
  position: absolute;
  bottom: 0;
  width: 14px;
  height: 14px;
}
.gc-tab::before { left: -14px; background: radial-gradient(circle at 0 0, transparent 13.5px, #3c3c3c 14px); }
.gc-tab::after { right: -14px; background: radial-gradient(circle at 100% 0, transparent 13.5px, #3c3c3c 14px); }
.gc-tab span { margin: 0 auto 0 11px; color: #e3e3e3; font-size: 14.5px; letter-spacing: -.1px; white-space: nowrap; }
.gc-bar {
  display: grid;
  height: 57px;
  border-radius: 10px 10px 0 0;
  background: #3c3c3c;
  grid-template-columns: 5px 44px 46px 44px 11px 636px 12px 44px 21px 46px 44px;
}
.omni {
  display: flex;
  align-items: center;
  height: 42px;
  margin-top: 8px;
  padding: 0 20px 0 6px;
  border-radius: 21px;
  background: #282828;
}
.info {
  display: flex;
  align-items: center;
  justify-content: center;
  width: 30px;
  height: 30px;
  margin-right: 10px;
  border-radius: 50%;
  background: #3c3c3c;
}
.omni .url { color: #e8e8e8; letter-spacing: -.4px; }
.omni .url i { color: #bdbdbd; }
.gc-sep { width: 2px; height: 20px; background: #5c5c5c; }
.gc-marks {
  display: flex;
  align-items: center;
  height: 44px;
  padding: 0 0 6px 15px;
  gap: 8px;
  background: #3c3c3c;
  color: #c7c7c7;
  font-size: 14.5px;
  letter-spacing: .05px;
}
.gc-body { display: flex; flex: 1; min-height: 0; }
.gc-scroll {
  display: flex;
  flex-direction: column;
  align-items: center;
  width: 19px;
  padding: 9px 0 8px;
  background: #424242;
}
.gc-scroll i { width: 15px; height: 734px; margin: 7px 0 auto 1px; background: #686868; }

/* Game page */
.page {
  position: relative;
  flex: 1;
  min-height: 0;
  overflow: hidden;
  padding: 25px;
  color: #fff;
  font-family: "Liberation Sans", Arial, sans-serif;
  font-size: 20px;
  line-height: 23px;
}
.page h1 { margin: 27px 0 26px; font-size: 40px; line-height: 46px; text-align: center; }
.page h3 { margin: 23px 0; font-size: 23.400px; line-height: 27px; }
.page .turn { margin-bottom: 25px; font-size: 23px; letter-spacing: -.2px; text-align: center; }
.chrome .page h1 { margin: 26px 0 25px; }
.board {
  display: grid;
  grid-template-columns: repeat(5, 75px);
  grid-auto-rows: 75px;
  gap: 2.500px;
  padding: 6.250px;
  border-radius: 6px;
  background: #333;
}
.board b {
  display: flex;
  align-items: center;
  justify-content: center;
  border-radius: 3px;
  background: #4a4a4a;
}
.a { color: #ff4a4a; }
.z { color: #4aff4a; }
.page .guide { margin-top: 50.500px; }
.page ul { margin: 23.400px 0 25px; padding-left: 50px; }
.page .history { margin-bottom: 22.500px; }
.arrows i { display: inline-block; line-height: 20px; transform: scaleX(1.25); }
.arrows .tall { transform: scaleY(1.3); }
.diag i { display: inline-block; width: 18.500px; font: 17px/15px "DejaVu Sans", sans-serif; }
.diag i:last-child { width: 14px; }
.page li:nth-child(4) { line-height: 24px; }
.firefox .page li:nth-child(2), .firefox .page li:nth-child(4) { line-height: 25px; }
.firefox .page li:nth-child(3) { line-height: 26px; }
.firefox .diag i { width: 20.500px; }
.firefox .diag i:last-child { width: 15px; }

/* Taskbar */
.taskbar {
  display: flex;
  height: 59px;
  border-top: 1px solid #55565a;
  background: linear-gradient(90deg, #1f2424, #1c2424 480px, #152137 740px, #271f38 870px, #2a1f42 1050px, #2b1653 1150px, #2a1845 1320px, #281c34 1520px, #251d2e);
  color: #fff;
}
.weather { position: relative; width: 368px; padding: 0 0 0 25px; }
.weather svg { margin-top: 11px; }
.weather span {
  position: absolute;
  top: 8px;
  left: 36px;
  width: 30px;
  height: 20px;
  border-radius: 10px;
  background: #2d2d2d;
  font-size: 13.5px;
  line-height: 20px;
  letter-spacing: -.3px;
  text-align: center;
}
.apps { display: flex; }
.apps span {
  position: relative;
  display: flex;
  align-items: center;
  justify-content: center;
  width: 55px;
  padding-left: 1px;
}
.apps .live::before {
  content: "";
  position: absolute;
  top: 4px;
  left: 3px;
  width: 49px;
  height: 50px;
  border-radius: 5px;
  border: 1px solid #443858;
  background: #3a2d52;
}
.live svg { position: relative; }
.run::after {
  content: "";
  position: absolute;
  top: 49px;
  left: 24px;
  width: 8px;
  height: 4px;
  border-radius: 2px;
  background: #958d9e;
}
.run.live::after { left: 18px; width: 20px; background: #dfa0e3; }
.letter {
  position: absolute;
  top: 21px;
  left: 13px;
  width: 16px;
  font-size: 11px;
  line-height: 16px;
  text-align: center;
}
.apps .person { position: absolute; top: 8px; right: 5px; }
.badge {
  position: absolute;
  top: 8px;
  left: 27px;
  width: 23px;
  height: 20px;
  border-radius: 10px;
  background: #dc9ee2;
  color: #281432;
  font-size: 13.5px;
  line-height: 20px;
  text-align: center;
  letter-spacing: -.5px;
}
.tray {
  display: grid;
  grid-template-columns: 27px 70px 24px 36px 24px 88px 38px 52px;
  margin-left: 79px;
  font-size: 14.5px;
  line-height: 20px;
  letter-spacing: -.3px;
}
.lang { padding-top: 10px; text-align: center; }
.clock { padding-top: 9px; text-align: right; }
.pre {
  position: absolute;
  top: 36px;
  left: 18px;
  width: 23px;
  height: 9px;
  border-radius: 2px;
  background: #fbbf0d;
  color: #1e1a10;
  font-size: 8px;
  line-height: 9px;
  letter-spacing: 0;
  text-align: center;
}
```
